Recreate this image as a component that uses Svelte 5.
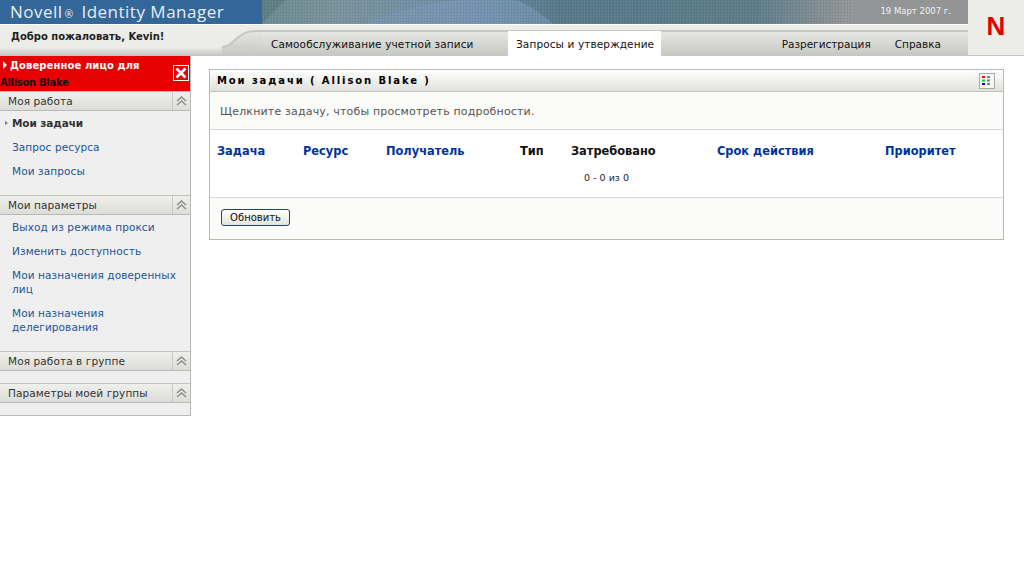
<script>
  const workItems = [
    { label: 'Мои задачи', active: true },
    { label: 'Запрос ресурса' },
    { label: 'Мои запросы' }
  ];
  const settingsItems = [
    'Выход из режима прокси',
    'Изменить доступность',
    'Мои назначения доверенных лиц',
    'Мои назначения делегирования'
  ];
  const columns = [
    { label: 'Задача', w: 86, link: true },
    { label: 'Ресурс', w: 83, link: true },
    { label: 'Получатель', w: 134, link: true },
    { label: 'Тип', w: 51 },
    { label: 'Затребовано', w: 146 },
    { label: 'Срок действия', w: 168, link: true },
    { label: 'Приоритет', w: 100, link: true }
  ];
</script>

{#snippet chevrons()}
  <span class="collapse">
    <svg viewBox="0 0 11 10" width="11" height="10" fill="none" stroke="#8b8f86" stroke-width="1.5">
      <path d="M1 5 5.500 1 10 5" />
      <path d="M1 9 5.500 5 10 9" />
    </svg>
  </span>
{/snippet}

<div class="page">
  <header>
    <div class="top">
      <div class="banner">
        <div class="brand">Novell<small>®</small> Identity Manager</div>
        <div class="photo">
          <svg viewBox="0 0 706 24" width="706" height="24">
            <defs>
              <linearGradient id="fade" x1="0" x2="1" y1="0" y2="0">
                <stop offset="0" stop-color="#6d8a90" />
                <stop offset="0.1" stop-color="#7a929c" />
                <stop offset="0.3" stop-color="#6f8da8" />
                <stop offset="0.42" stop-color="#567a88" />
                <stop offset="0.7" stop-color="#5e7d8a" />
                <stop offset="0.83" stop-color="#939596" />
                <stop offset="1" stop-color="#949494" />
              </linearGradient>
              <pattern id="dots" width="3" height="3" patternUnits="userSpaceOnUse">
                <rect width="1" height="1" fill="#2d4450" opacity="0.18" />
                <rect x="1" y="1" width="1" height="2" fill="#fff" opacity="0.05" />
              </pattern>
            </defs>
            <rect width="706" height="24" fill="url(#fade)" />
            <path d="M0 24Q14 8 24 0H0Z" fill="#55777c" opacity="0.6" />
            <path d="M100 24Q140 8 190 0H255Q280 12 291 24Z" fill="#7a98b5" opacity="0.6" />
            <rect width="590" height="24" fill="url(#dots)" />
          </svg>
          <span class="date">19 Март 2007 г.</span>
        </div>
      </div>
      <div class="subbar">
        <div class="welcome">Добро пожаловать, Kevin!</div>
        <svg class="curve" viewBox="0 0 40 32" width="40" height="32">
          <defs>
            <linearGradient id="bar" gradientUnits="userSpaceOnUse" x1="0" x2="0" y1="6" y2="32">
              <stop offset="0" stop-color="#e6e7e4" />
              <stop offset="1" stop-color="#c5c7c0" />
            </linearGradient>
          </defs>
          <path d="M0 23C12 23 14 7 34 7H40V32H0Z" fill="url(#bar)" />
          <path d="M0 23C12 23 14 7 34 7H40" fill="none" stroke="#c6c7c2" stroke-width="2" />
        </svg>
        <nav>
          <div class="tabs">
            <span class="tab first">Самообслуживание учетной записи</span>
            <span class="tab current">Запросы и утверждение</span>
          </div>
          <div class="tools">
            <span>Разрегистрация</span>
            <span>Справка</span>
          </div>
        </nav>
      </div>
    </div>
    <div class="logo"><span>N</span></div>
  </header>

  <div class="body">
    <aside>
      <div class="proxy">
        <div class="proxy-title"><i></i>Доверенное лицо для</div>
        <div class="proxy-name">Allison Blake</div>
        <span class="proxy-close">
          <svg viewBox="0 0 14 14" width="14" height="14" stroke="#fff" stroke-width="2.600">
            <path d="M2.500 2.500 11.500 11.500M11.500 2.500 2.500 11.500" />
          </svg>
        </span>
      </div>

      <div class="sec-head"><span>Моя работа</span>{@render chevrons()}</div>
      <ul class="work">
        {#each workItems as item}
          <li class:active={item.active}>{item.label}</li>
        {/each}
      </ul>

      <div class="sec-head"><span>Мои параметры</span>{@render chevrons()}</div>
      <ul class="settings">
        {#each settingsItems as label}
          <li>{label}</li>
        {/each}
      </ul>

      <div class="sec-head"><span>Моя работа в группе</span>{@render chevrons()}</div>
      <div class="empty"></div>

      <div class="sec-head"><span>Параметры моей группы</span>{@render chevrons()}</div>
      <div class="empty"></div>
    </aside>

    <main>
      <section class="panel">
        <div class="panel-head">
          <h1>Мои задачи ( Allison Blake )</h1>
          <span class="legend">
            <svg viewBox="0 0 10 9" width="10" height="9">
              <rect x="0" y="0" width="3" height="2" fill="#e01010" />
              <rect x="0" y="3.500" width="3" height="2" fill="#10d010" />
              <rect x="0" y="7" width="3" height="2" fill="#1010d0" />
              <rect x="5" y="0" width="3" height="2" fill="#808080" />
              <rect x="5" y="3.500" width="3" height="2" fill="#808080" />
              <rect x="5" y="7" width="3" height="2" fill="#808080" />
            </svg>
          </span>
        </div>
        <p class="hint">Щелкните задачу, чтобы просмотреть подробности.</p>
        <div class="table">
          <div class="cols">
            {#each columns as col}
              <span class:link={col.link} style="width:{col.w}px">{col.label}</span>
            {/each}
          </div>
          <div class="count">0 - 0 из 0</div>
        </div>
        <div class="panel-foot">
          <button>Обновить</button>
        </div>
      </section>
    </main>
  </div>
</div>

<style>
  :global(body) {
    margin: 0;
    background: #fff;
    font-family: "DejaVu Sans", Verdana, sans-serif;
    font-size: 11px;
  }
  .page { width: 1024px; height: 571px; overflow: hidden; }

  header { display: flex; height: 56px; }
  .top { flex: 1; min-width: 0; }
  .banner { display: flex; height: 24px; }
  .brand {
    width: 262px;
    background: #336699;
    color: #e8eef4;
    font-family: "Open Sans", "DejaVu Sans", sans-serif;
    font-size: 17px;
    line-height: 24px;
    letter-spacing: 0.5px;
    padding-left: 10px;
    box-sizing: border-box;
    white-space: nowrap;
  }
  .brand small { font-size: 10px; margin: 0 3px 0 2px; }
  .photo { position: relative; flex: 1; overflow: hidden; }
  .photo svg { display: block; }
  .date {
    position: absolute;
    right: 17px;
    top: 5px;
    color: #f2f2f2;
    font-size: 8.500px;
    line-height: 12px;
  }

  .subbar {
    display: flex;
    height: 32px;
    background: linear-gradient(#ecece9 0 22px, #d6d7d2 27px, #bfc1ba 31px);
    border-top: 1px solid #fff;
    box-sizing: border-box;
  }
  .welcome {
    width: 222px;
    flex: none;
    color: #222;
    font-weight: bold;
    font-size: 10px;
    line-height: 24px;
    padding-left: 11px;
    box-sizing: border-box;
    white-space: nowrap;
  }
  .curve { flex: none; margin-top: -1px; }
  nav {
    flex: 1;
    display: flex;
    justify-content: space-between;
    margin-top: 5px;
    border-top: 2px solid #c6c7c2;
    background: linear-gradient(#e6e7e4, #c5c7c0);
    color: #111;
    font-size: 10.500px;
  }
  .tabs { display: flex; letter-spacing: 0.12px; }
  .tab { padding: 5px 8px 0; line-height: 14px; white-space: nowrap; box-sizing: border-box; }
  .tab.first { width: 246px; padding-left: 9px; }
  .tab.current { background: #fff; width: 153px; margin-top: -1px; padding-top: 6px; }
  .tools { display: flex; gap: 24px; padding: 5px 27px 0 0; line-height: 14px; }

  .logo {
    width: 56px;
    height: 56px;
    box-sizing: border-box;
    background: #ecece9;
    border-bottom: 1px solid #c4c6c0;
    display: flex;
    align-items: center;
    justify-content: center;
    padding-bottom: 3px;
  }
  .logo span {
    color: #e00000;
    font-family: "Liberation Sans", Arial, sans-serif;
    font-weight: bold;
    font-size: 26px;
    line-height: 24px;
  }

  .body { display: flex; align-items: flex-start; }

  aside {
    width: 191px;
    box-sizing: border-box;
    background: #efefef;
    border-right: 1px solid #b9bab5;
    border-bottom: 1px solid #b9bab5;
    flex: none;
  }
  .proxy {
    position: relative;
    height: 35px;
    background: #e60000;
  }
  .proxy-title {
    color: #fff;
    font-weight: bold;
    font-size: 10px;
    letter-spacing: 0.1px;
    line-height: 14px;
    padding: 3px 0 0 3px;
  }
  .proxy-title i {
    display: inline-block;
    border-left: 4px solid #fff;
    border-top: 4px solid transparent;
    border-bottom: 4px solid transparent;
    margin-right: 3px;
  }
  .proxy-name {
    color: #111;
    font-weight: bold;
    font-size: 10px;
    line-height: 14px;
    margin-top: 3px;
    letter-spacing: -0.3px;
  }
  .proxy-close {
    position: absolute;
    left: 173px;
    top: 9px;
    width: 14px;
    height: 14px;
    border: 1px solid #fff;
    display: flex;
  }

  .sec-head {
    display: flex;
    height: 20px;
    box-sizing: border-box;
    border-top: 1px solid #c0c1bb;
    border-bottom: 1px solid #b9bab5;
    background: linear-gradient(#efefed, #dcddd8);
    color: #333;
    font-size: 10.500px;
    line-height: 18px;
  }
  .sec-head span:first-child { flex: 1; padding-left: 8px; letter-spacing: 0.1px; }
  .collapse {
    width: 17px;
    flex: none;
    border-left: 1px solid #c8c9c4;
    display: flex;
    align-items: center;
    justify-content: center;
  }

  ul { list-style: none; margin: 0; padding: 0; color: #1a5596; font-size: 10.500px; }
  ul li { padding-left: 12px; line-height: 14px; letter-spacing: 0.1px; }
  .work { height: 84px; padding-top: 5px; box-sizing: border-box; }
  .work li { margin-bottom: 10px; }
  .work li.active { color: #333; font-weight: bold; position: relative; letter-spacing: -0.1px; }
  .work li.active::before {
    content: "";
    position: absolute;
    left: 5px;
    top: 5px;
    border-left: 3px solid #777;
    border-top: 2px solid transparent;
    border-bottom: 2px solid transparent;
  }
  .settings { height: 136px; padding-top: 5px; box-sizing: border-box; }
  .settings li { margin-bottom: 10px; padding-right: 6px; }
  .empty { height: 12px; }

  main { flex: 1; padding: 13px 20px 0 18px; }
  .panel {
    border: 1px solid #b9bab5;
    background: #fbfbf9;
  }
  .panel-head {
    height: 21px;
    display: flex;
    align-items: center;
    justify-content: space-between;
    background: linear-gradient(#fff, #e0e1dd);
    border-bottom: 1px solid #c0c1bb;
    padding: 0 8px 0 7px;
  }
  h1 {
    margin: 0;
    color: #000;
    font-size: 10px;
    font-weight: bold;
    letter-spacing: 1.9px;
    white-space: nowrap;
  }
  .legend {
    width: 14px;
    height: 14px;
    background: #f5f5f3;
    border: 1px solid #a8a9a4;
    display: flex;
    align-items: center;
    justify-content: center;
  }
  .hint {
    margin: 0;
    height: 37px;
    box-sizing: border-box;
    padding: 13px 0 0 10px;
    line-height: 14px;
    color: #555;
    font-size: 11px;
    letter-spacing: 0.17px;
  }
  .table {
    background: #fff;
    border-top: 1px solid #d8d8d6;
    border-bottom: 1px solid #d8d8d6;
    height: 69px;
    box-sizing: border-box;
  }
  .cols { display: flex; padding: 14px 0 0 7px; line-height: 14px; font-weight: bold; color: #111; font-size: 11.400px; }
  .cols span { flex: none; white-space: nowrap; }
  .cols .link { color: #003399; }
  .count { text-align: center; margin-top: 13px; font-size: 9.500px; line-height: 14px; color: #222; }
  .panel-foot { height: 41px; padding: 11px 0 0 11px; box-sizing: border-box; }
  button {
    display: block;
    width: 69px;
    height: 17px;
    padding: 0;
    border: 1px solid #24466c;
    border-radius: 3px;
    background: linear-gradient(#fff, #e4e4de);
    color: #111;
    font-family: inherit;
    font-size: 10px;
    line-height: 15px;
  }
</style>
